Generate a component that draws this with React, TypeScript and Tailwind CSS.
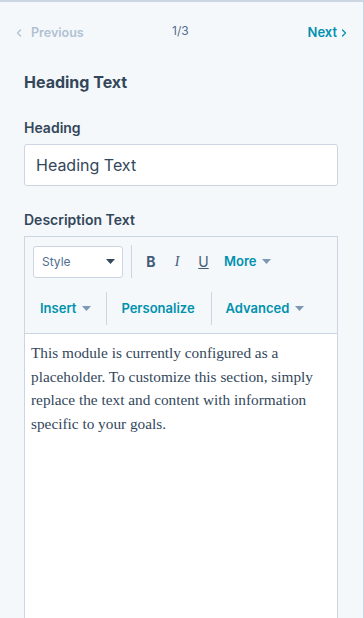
import { ChevronLeft, ChevronRight } from "lucide-react";

const ui = { fontFamily: "Inter, 'Noto Sans', sans-serif" };
const serif = { fontFamily: "'Liberation Serif', 'DejaVu Serif', serif" };

function Caret({ dark = false }: { dark?: boolean }) {
  return (
    <svg width="9" height="5" viewBox="0 0 9 5" className="shrink-0">
      <path d="M0 0h9L4.5 5z" fill={dark ? "#33475b" : "#7c98b6"} />
    </svg>
  );
}

function Sep({ h = "h-[33px]" }: { h?: string }) {
  return <div className={`w-px ${h} bg-[#cbd6e2] shrink-0`} />;
}

export default function App() {
  return (
    <div
      className="h-[618px] w-full overflow-hidden bg-[#f5f8fa] border-t-2 border-r border-[#cbd6e2] text-[#33475b]"
      style={ui}
    >
      {/* pager */}
      <div className="relative flex items-center justify-between h-5 mt-[21px] pl-[13px] pr-[13px]">
        <button className="flex items-center gap-[6px] text-[12.5px] font-semibold text-[#b0c1d4]">
          <ChevronLeft className="h-3 w-3" strokeWidth={2.5} />
          Previous
        </button>
        <span className="absolute left-[172px] -top-[1px] text-[12px] text-[#516f90]">1/3</span>
        <button className="flex items-center text-[13px] font-semibold text-[#0091ae]">
          Next
          <ChevronRight className="h-3 w-3 ml-[1px]" strokeWidth={2.5} />
        </button>
      </div>

      <div className="pl-6 pr-[25px]">
        <h2 className="mt-[29px] text-[16px] leading-5 font-bold">Heading Text</h2>

        <label className="block mt-[27px] text-[14px] leading-[18px] font-semibold">Heading</label>
        <div className="mt-[7px] h-[42px] flex items-center px-[11px] bg-white border border-[#cbd6e2] rounded-[3px] text-[16px]">
          Heading Text
        </div>

        <label className="block mt-[25px] text-[14px] leading-[18px] font-semibold">
          Description Text
        </label>

        <div className="mt-[7px] border border-[#cbd6e2] bg-white h-[400px]">
          {/* toolbar */}
          <div className="bg-[#f5f8fa] border-b border-[#cbd6e2] pb-2">
            <div className="flex items-center pt-2 pl-2">
              <div className="w-[90px] h-[32px] flex items-center justify-between pl-2 pr-[7px] bg-white border border-[#cbd6e2] rounded-[3px] text-[12px] text-[#516f90]">
                Style
                <Caret dark />
              </div>
              <div className="ml-2">
                <Sep />
              </div>
              <div className="flex items-center ml-[6px] text-[14px] font-bold text-[#425b76]">
                <span className="w-[26px] text-center">B</span>
                <span className="w-[26px] text-center italic font-normal" style={serif}>
                  I
                </span>
                <span className="w-[27px] text-center underline font-normal">U</span>
              </div>
              <div className="flex items-center gap-[6px] ml-[7px] text-[13px] font-semibold text-[#0091ae]">
                More
                <Caret />
              </div>
            </div>
            <div className="flex items-center mt-[14px] text-[13px] font-semibold text-[#0091ae]">
              <div className="flex items-center gap-[6px] pl-[15px] pr-[15px]">
                Insert
                <Caret />
              </div>
              <Sep />
              <div className="pl-[14px] pr-[16px]">Personalize</div>
              <Sep />
              <div className="flex items-center gap-[6px] pl-[14px]">
                Advanced
                <Caret />
              </div>
            </div>
          </div>

          {/* content */}
          <p className="pt-[7px] pl-[6px] pr-[12px] text-[15.3px] leading-[23.5px] text-[#33475b]" style={serif}>
            This module is currently configured as a placeholder. To customize this section, simply
            replace the text and content with information specific to your goals.
          </p>
        </div>
      </div>
    </div>
  );
}
